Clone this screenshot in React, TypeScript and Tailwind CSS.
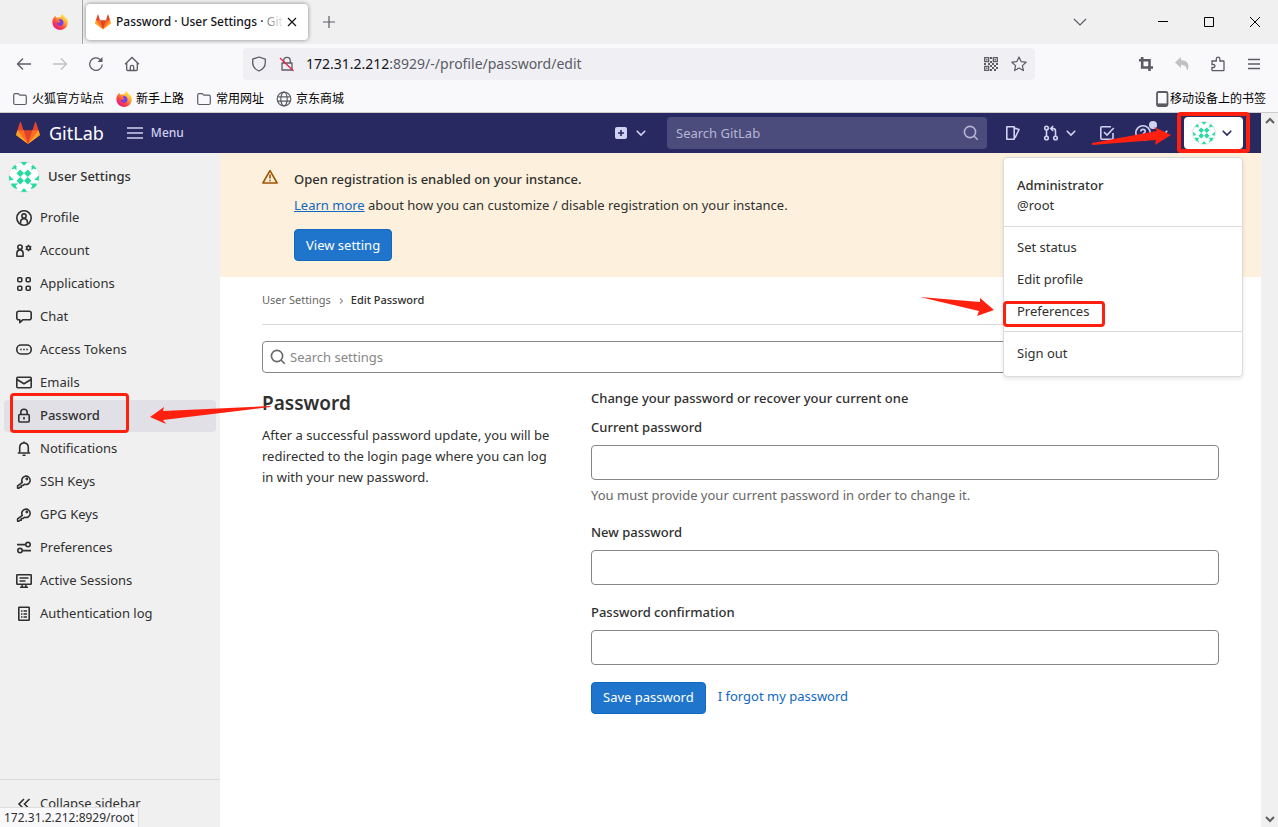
import type { ReactNode } from 'react';

type IconProps = { children: ReactNode; className?: string };

function Icon({ children, className = '' }: IconProps) {
  return (
    <svg
      viewBox="0 0 16 16"
      className={`h-4 w-4 shrink-0 ${className}`}
      fill="none"
      stroke="currentColor"
      strokeWidth="1.6"
      aria-hidden="true"
    >
      {children}
    </svg>
  );
}

const ChevronDown = ({ className = '' }: { className?: string }) => (
  <Icon className={className}>
    <path d="M4.2 6.2 8 10l3.8-3.8" strokeLinecap="round" />
  </Icon>
);

const SearchIcon = ({ className = '' }: { className?: string }) => (
  <Icon className={className}>
    <circle cx="7" cy="7" r="5.6" />
    <path d="m11.2 11.2 3.6 3.6" />
  </Icon>
);

const FolderIcon = () => (
  <Icon className="text-[#5b5b66]">
    <path d="M1.7 12V4.2c0-.9.6-1.5 1.5-1.5h2.6c.5 0 .9.2 1.2.6l.8.9h5c.9 0 1.5.6 1.5 1.5V12c0 .9-.6 1.5-1.5 1.5H3.2c-.9 0-1.5-.6-1.5-1.5z" strokeWidth="1.2" />
  </Icon>
);

function FirefoxLogo() {
  return (
    <svg viewBox="0 0 16 16" className="h-4 w-4 shrink-0" aria-hidden="true">
      <defs>
        <linearGradient id="fox" x1="0.85" y1="0.1" x2="0.2" y2="0.95">
          <stop offset="0" stopColor="#fff44f" />
          <stop offset="0.35" stopColor="#ffa436" />
          <stop offset="0.65" stopColor="#ff4a3c" />
          <stop offset="1" stopColor="#e31587" />
        </linearGradient>
      </defs>
      <path
        fill="url(#fox)"
        d="M15.3 5.4c-.3-.8-1-1.7-1.6-2 .5 1 .7 1.900.8 2.400C13.600 3.500 12.200 2.500 11 .7L10.400 0C9.300.7 8.900 2 8.800 2.900c-.8 0-1.600.3-2.300.7-.6-.1-1.500-.1-2 .1C3.800 3.300 3.700 2.200 3.800 1.700 2.900 2.200 2 3.200 1.500 4 .8 5.100.3 6.800.4 8.500.6 12.700 4 15.900 8.100 15.900c4 0 7.400-3 7.700-7 .1-1.200 0-2.500-.5-3.500z"
      />
      <path fill="#7542e5" d="M7.900 4.900c2 0 3.600 1.600 3.600 3.500S10 11.900 8 11.900 4.600 10.400 4.600 8.600c.9.6 1.900.4 2.500-.1.6-.4 1-.5 1.400-.5-.2-.8-1-1.200-1.900-1.200.1-.9.700-1.600 1.300-1.900z" />
    </svg>
  );
}

function GitLabLogo({ className = '' }: { className?: string }) {
  return (
    <svg viewBox="0 0 36 36" className={`shrink-0 ${className}`} aria-hidden="true">
      <path fill="#e24329" d="M2 14l9.380 9v-9l-4-12.280c-.205-.632-1.176-.632-1.380 0z" />
      <path fill="#e24329" d="M34 14l-9.380 9v-9l4-12.280c.205-.632 1.176-.632 1.380 0z" />
      <path fill="#e24329" d="M18 34.380 3 14h30z" />
      <path fill="#fc6d26" d="M18 34.380 11.380 14H2l4 11z" />
      <path fill="#fc6d26" d="M18 34.380 24.620 14H34l-4 11z" />
      <path fill="#fca326" d="M2 14 .1 20.160c-.18.565 0 1.200.5 1.560L18 34.380z" />
      <path fill="#fca326" d="m34 14 1.900 6.160c.18.565 0 1.200-.5 1.560L18 34.380z" />
    </svg>
  );
}

function Avatar({ className = '' }: { className?: string }) {
  return (
    <svg viewBox="0 0 32 32" className={`shrink-0 rounded-full border border-[#e4e4ea] bg-white ${className}`} aria-hidden="true">
      <g fill="#26dba0">
        <path d="M12 8l4 4-4 4-4-4zM20 8l4 4-4 4-4-4zM12 16l4 4-4 4-4-4zM20 16l4 4-4 4-4-4z" />
        <path d="M12 0h8l-4 4zM12 32h8l-4-4zM0 14v6l5-1zM32 14v6l-5-1z" />
        <path d="M4 2l4 2v5l-2-2-3 1zM28 2l-4 2v5l2-2 3 1zM2 23h8l-3 2 2 4-6-2zM30 23h-8l3 2-2 4 6-2z" />
      </g>
    </svg>
  );
}

const navItems: { label: string; icon: ReactNode }[] = [
  {
    label: 'Profile',
    icon: (
      <>
        <circle cx="8" cy="8" r="7.200" />
        <circle cx="8" cy="6" r="2.100" />
        <path d="M4.600 13.800v-1.600c0-2 1.400-3.400 3.400-3.400s3.400 1.400 3.400 3.400v1.600" />
      </>
    ),
  },
  {
    label: 'Account',
    icon: (
      <>
        <circle cx="4" cy="4.200" r="2.200" />
        <path d="M.9 13.200v-2.900C.9 8.300 2.200 7 4 7s3.100 1.300 3.100 3.300v2.900z" strokeLinejoin="round" />
        <circle cx="12.500" cy="5" r="1.700" />
        <path d="M12.500 1.800v1.400M12.500 6.800v1.400M9.700 3.400l1.200.7M14.100 5.900l1.200.7M9.700 6.600l1.200-.7M14.100 4.100l1.200-.7" />
      </>
    ),
  },
  {
    label: 'Applications',
    icon: (
      <>
        <rect x="1.800" y="1.800" width="4" height="4" rx="1" />
        <rect x="10.200" y="1.800" width="4" height="4" rx="1" />
        <rect x="1.800" y="10.200" width="4" height="4" rx="1" />
        <rect x="10.200" y="10.200" width="4" height="4" rx="1" />
      </>
    ),
  },
  {
    label: 'Chat',
    icon: <path d="M3.800 10.700v2.900l3.200-2.900h6.200c1.200 0 2-.8 2-2V4.300c0-1.200-.8-2-2-2H2.800c-1.200 0-2 .8-2 2v4.400c0 1.200.8 2 2 2z" strokeLinejoin="round" />,
  },
  {
    label: 'Access Tokens',
    icon: (
      <>
        <rect x=".8" y="3" width="14.400" height="9" rx="4.200" />
        <path d="M4.200 7.500h1.500M7.250 7.500h1.500M10.300 7.500h1.500" />
      </>
    ),
  },
  {
    label: 'Emails',
    icon: (
      <>
        <rect x=".8" y="2.300" width="14.400" height="10.400" rx="1" />
        <path d="m1 4.500 7 4.200 7-4.200" />
      </>
    ),
  },
  {
    label: 'Password',
    icon: (
      <>
        <rect x="2.800" y="6.500" width="10.400" height="7.500" rx="1" />
        <path d="M4.800 6.500V4.400a3.200 3.200 0 0 1 6.400 0v2.100M8 9v2.600" />
      </>
    ),
  },
  {
    label: 'Notifications',
    icon: (
      <>
        <path d="M3.700 11.700V6.600C3.700 4 5.400 2 8 2s4.300 2 4.300 4.600v5.100" />
        <path d="M1.800 12h12.400M8 .6V2M6.500 14.200h3" />
      </>
    ),
  },
  { label: 'SSH Keys', icon: <KeyShape /> },
  { label: 'GPG Keys', icon: <KeyShape /> },
  {
    label: 'Preferences',
    icon: (
      <>
        <circle cx="12" cy="4.600" r="2.200" />
        <circle cx="4" cy="10.600" r="2.200" />
        <path d="M1 4.600h8.600M6.400 10.600H15" />
      </>
    ),
  },
  {
    label: 'Active Sessions',
    icon: (
      <>
        <rect x=".8" y="1.800" width="14.400" height="9.400" rx=".5" />
        <path d="M3.500 5h9M3.500 8h6M6.200 11v3M9.800 11v3M4 14.200h8" />
      </>
    ),
  },
  {
    label: 'Authentication log',
    icon: (
      <>
        <rect x="2.800" y="1.200" width="10.400" height="13" rx=".5" />
        <path d="M5 5h1.500M7.500 5H11M5 8h1.500M7.500 8H11M5 11h1.500M7.500 11H11" />
      </>
    ),
  },
];

function KeyShape() {
  return (
    <>
      <path d="M6.300 8.400a4.200 4.200 0 1 1 2 1.800L7 11.500H5.300v1.700H3.800L2.900 14.200H1.600v-2.400z" strokeLinejoin="round" />
      <circle cx="10.800" cy="5" r=".6" />
    </>
  );
}

// Red frame drawn over a control
const Frame = ({ className }: { className: string }) => (
  <span className={`pointer-events-none absolute rounded-sm border-[#ff2010] ${className}`} />
);

function BrowserChrome() {
  return (
    <div className="shrink-0 text-[#15141a]">
      <div className="flex h-11 items-center bg-[#f0f0f0]">
        <div className="flex h-full w-[83px] items-center justify-end border-r border-[#a8a8a8] pr-[14px]">
          <FirefoxLogo />
        </div>
        <div className="ml-[3px] flex h-9 w-[222px] items-center rounded bg-white pl-[9px] pr-2 shadow-[0_0_4px_rgba(0,0,0,0.45)]">
          <GitLabLogo className="h-4 w-4" />
          <span className="ml-[5px] w-[168px] whitespace-nowrap text-xs font-medium">
            Password · User Settings ·{' '}
            <span className="bg-gradient-to-r from-[#777777] to-[#eeeeee] bg-clip-text font-normal text-transparent">Git</span>
          </span>
          <button aria-label="Close tab">
            <Icon>
              <path d="m4 4 8 8M12 4l-8 8" strokeWidth="1.200" />
            </Icon>
          </button>
        </div>
        <button aria-label="New tab" className="ml-[13px] text-[#5b5b66]">
          <Icon>
            <path d="M8 2v12M2 8h12" strokeWidth="1.200" />
          </Icon>
        </button>
        <button aria-label="List all tabs" className="ml-auto mr-[52px] text-[#5b5b66]">
          <Icon>
            <path d="m2 5 6 6 6-6" strokeWidth="1.200" />
          </Icon>
        </button>
        <button aria-label="Minimize" className="flex h-full w-[46px] items-center justify-center text-black">
          <Icon>
            <path d="M3 7.500h10" strokeWidth="1" />
          </Icon>
        </button>
        <button aria-label="Maximize" className="flex h-full w-[46px] items-center justify-center text-black">
          <Icon>
            <path d="M3.500 3.500h9v9h-9z" strokeWidth="1" />
          </Icon>
        </button>
        <button aria-label="Close" className="flex h-full w-[46px] items-center justify-center text-black">
          <Icon>
            <path d="m3 3 10 10M13 3 3 13" strokeWidth="1" />
          </Icon>
        </button>
      </div>

      <div className="flex h-10 items-center bg-[#f9f9fb] px-1.5 text-[#5b5b66]">
        <button aria-label="Back" className="flex w-9 justify-center">
          <Icon>
            <path d="M15 8H1.500M7 2.500 1.500 8 7 13.500" strokeWidth="1.300" />
          </Icon>
        </button>
        <button aria-label="Forward" className="flex w-9 justify-center text-[#c0c0c5]">
          <Icon>
            <path d="M1 8h13.500M9 2.500 14.500 8 9 13.500" strokeWidth="1.300" />
          </Icon>
        </button>
        <button aria-label="Reload" className="flex w-9 justify-center">
          <Icon>
            <path d="M14.300 8.500a6.300 6.300 0 1 1-2-5" strokeWidth="1.300" />
            <path d="M14.500 1v5h-5z" fill="currentColor" stroke="none" />
          </Icon>
        </button>
        <button aria-label="Home" className="flex w-9 justify-center">
          <Icon>
            <path d="M1 8.300 8 1.500l7 6.800M2.700 7v6.500c0 .6.400 1 1 1h8.600c.6 0 1-.4 1-1V7M6.300 14.500V11c0-1 .7-1.700 1.700-1.700s1.700.7 1.700 1.700v3.500" strokeWidth="1.300" />
          </Icon>
        </button>
        <div className="mx-[93px] flex h-8 flex-1 items-center rounded bg-[#f0f0f4] px-2">
          <Icon>
            <path d="M8 1 14.300 3.200v3.600c0 3.500-2.300 6.500-6.300 8.200-4-1.700-6.300-4.700-6.300-8.200V3.200z" strokeWidth="1.300" strokeLinejoin="round" />
          </Icon>
          <Icon className="ml-3">
            <path d="M4.700 6.500V4.700a3.300 3.300 0 0 1 6.600 0v1.800M3 7h10v7H3z" strokeWidth="1.300" strokeLinejoin="round" />
            <path d="m1 2 13.500 13" stroke="#e22850" strokeWidth="1.400" />
          </Icon>
          <div className="ml-[11px] flex-1 text-sm">
            <span className="text-[#15141a]">172.31.2.212</span>:8929/-/profile/password/edit
          </div>
          <button aria-label="QR code">
            <Icon>
              <path d="M1.700 1.700h4v4h-4zM10.300 1.700h4v4h-4zM1.700 10.300h4v4h-4z" strokeWidth="1.300" />
              <path d="M7 1h2v2H7zM7 5h2v2H7zM9 7h2v2H9zM1 7h2v2H1zM5 7h2v2H5zM13 7h2v2h-2zM7 9h2v2H7zM11 9h2v2h-2zM9 11h2v2H9zM13 11h2v2h-2zM7 13h2v2H7zM11 13h2v2h-2zM3 3h1.500v1.500H3zM11.500 3H13v1.500h-1.500zM3 11.500h1.500V13H3z" fill="currentColor" stroke="none" />
            </Icon>
          </button>
          <button aria-label="Bookmark this page" className="ml-3">
            <Icon>
              <path d="m8 1 2.100 4.600 5 .6-3.700 3.400 1 5L8 12.100l-4.400 2.500 1-5L.9 6.200l5-.6z" strokeWidth="1.200" strokeLinejoin="round" />
            </Icon>
          </button>
        </div>
        <button aria-label="Screenshot" className="flex w-9 justify-center">
          <Icon>
            <path d="M4.200 1v10.500H15M1 4.200h10.500V15" strokeWidth="2.600" />
          </Icon>
        </button>
        <button aria-label="Undo" className="flex w-9 justify-center text-[#c0c0c5]">
          <Icon>
            <path d="M1 6.500 7 1v3.300c4.500 0 7.500 2 7.500 6.200 0 1.600-.6 3-1.500 4-.2-3.500-2-5.500-6-5.700V12z" fill="currentColor" stroke="none" />
          </Icon>
        </button>
        <button aria-label="Extensions" className="flex w-9 justify-center">
          <Icon>
            <path d="M2 5h4.300V3a1.800 1.800 0 0 1 3.600 0v2h3.400c.4 0 .7.3.7.7V14c0 .4-.3.700-.7.700H2.700c-.4 0-.7-.3-.7-.7v-2.500h1.500a1.500 1.500 0 0 0 0-3H2z" strokeWidth="1.300" />
          </Icon>
        </button>
        <button aria-label="Application menu" className="flex w-9 justify-center">
          <Icon>
            <path d="M2 3.500h12M2 8h12M2 12.500h12" strokeWidth="1.300" />
          </Icon>
        </button>
      </div>

      <div className="flex h-[29px] items-center gap-3 border-b border-[#cccccc] bg-[#f9f9fb] px-3 pt-0.5 text-xs text-black">
        <a href="#" className="flex items-center gap-1"><FolderIcon />火狐官方站点</a>
        <a href="#" className="flex items-center gap-1"><FirefoxLogo />新手上路</a>
        <a href="#" className="flex items-center gap-1"><FolderIcon />常用网址</a>
        <a href="#" className="flex items-center gap-1">
          <Icon className="text-[#5b5b66]">
            <circle cx="8" cy="8" r="6.800" strokeWidth="1.200" />
            <ellipse cx="8" cy="8" rx="3.200" ry="6.800" strokeWidth="1.200" />
            <path d="M1.500 5.800h13M1.500 10.200h13" strokeWidth="1.200" />
          </Icon>
          京东商城
        </a>
        <a href="#" className="ml-auto flex items-center">
          <Icon className="text-[#5b5b66]">
            <rect x="3" y="1" width="10.500" height="14" rx="1.500" strokeWidth="1.800" />
            <path d="M3 13.300h10" strokeWidth="1.800" />
          </Icon>
          移动设备上的书签
        </a>
      </div>
    </div>
  );
}

function UserMenu() {
  return (
    <div className="absolute right-[18px] top-11 z-20 w-60 rounded border border-[#dbdbdb] bg-white text-[#303030] shadow-[0_2px_4px_rgba(0,0,0,0.1)]">
      <div className="border-b border-[#dbdbdb] px-[13px] pb-[11px] pt-[17px] leading-5">
        <div className="font-medium">Administrator</div>
        <div>@root</div>
      </div>
      <ul className="border-b border-[#dbdbdb] pb-[3px] pt-[5px]">
        <li><a href="#" className="flex h-8 items-center px-[13px]">Set status</a></li>
        <li><a href="#" className="flex h-8 items-center px-[13px]">Edit profile</a></li>
        <li className="relative">
          <a href="#" className="flex h-8 items-center px-[13px]">Preferences</a>
          <Frame className="-left-px top-[5px] h-[26px] w-[102px] border-3" />
          <svg viewBox="0 0 76 22" className="pointer-events-none absolute -left-[85px] top-px h-[22px] w-[76px]" fill="#ff2010" aria-hidden="true">
            <path d="M1 0 61 5 61 1 75 13 58 19 60 14z" />
          </svg>
        </li>
      </ul>
      <a href="#" className="flex h-11 items-center px-[13px]">Sign out</a>
    </div>
  );
}

function Header() {
  return (
    <header className="relative flex h-10 shrink-0 items-center bg-[#292961] pl-4 pr-[18px] text-[#d1d1f0]">
      <a href="#" className="flex items-center gap-[9px] text-lg text-white">
        <GitLabLogo className="h-6 w-6" />
        GitLab
      </a>
      <button className="ml-[23px] flex items-center gap-2 text-xs font-medium">
        <Icon>
          <path d="M0 3h16M0 8h16M0 13h16" />
        </Icon>
        Menu
      </button>
      <button aria-label="Create new" className="ml-auto flex items-center gap-1">
        <Icon>
          <rect x="2" y="2" width="12" height="12" rx="2" fill="currentColor" stroke="none" />
          <path d="M8 5v6M5 8h6" stroke="#292961" />
        </Icon>
        <ChevronDown />
      </button>
      <label className="relative ml-[18px] w-80">
        <input
          type="text"
          aria-label="Search GitLab"
          placeholder="Search GitLab"
          className="block h-8 w-full rounded bg-[#4c4c7c] pl-[9px] pr-9 placeholder:text-[#b5b5d6]"
        />
        <SearchIcon className="absolute right-2 top-2 text-[#b5b5d6]" />
      </label>
      <button aria-label="Issues" className="ml-[18px]">
        <Icon>
          <path d="M1.800 1.800h7.400v12.400H1.800zM9.500 3l4.500 1.500-4 8.500" strokeLinejoin="round" />
        </Icon>
      </button>
      <button aria-label="Merge requests" className="ml-[22px] flex items-center gap-1">
        <Icon>
          <circle cx="3.500" cy="3" r="1.800" />
          <circle cx="3.500" cy="13" r="1.800" />
          <circle cx="12.500" cy="13" r="1.800" />
          <path d="M3.500 5v6M12.500 11V6c0-1.500-.8-2.500-2.500-2.500H8M10.200 1 7.700 3.500 10.200 6" />
        </Icon>
        <ChevronDown />
      </button>
      <button aria-label="To-Do List" className="ml-5">
        <Icon>
          <path d="M14 8v5.200c0 .6-.4 1-1 1H2.800c-.6 0-1-.4-1-1V2.800c0-.6.4-1 1-1H12M5 7l3 3 6.800-7" />
        </Icon>
      </button>
      <button aria-label="Help" className="relative ml-5 flex items-center gap-1">
        <Icon>
          <circle cx="8" cy="8" r="7.200" />
          <path d="M5.800 6.500c0-1.300 1-2.100 2.200-2.100s2.200.8 2.200 2c0 1.500-2.200 1.500-2.200 3.300M8 10.700v1.500" />
        </Icon>
        <ChevronDown />
        <span className="absolute -top-1 left-[14px] h-2 w-2 rounded-full bg-[#d1d1f0]" />
      </button>
      <button aria-label="Administrator" className="relative ml-[13px] flex h-8 w-[59px] items-center gap-[3px] rounded bg-white pl-2 text-[#292961]">
        <Avatar className="h-6 w-6" />
        <ChevronDown />
        <Frame className="-left-[7px] -top-[5px] h-[41px] w-[73px] border-4" />
        <svg viewBox="0 0 80 18" className="pointer-events-none absolute -left-[92px] top-[10px] h-[18px] w-20" fill="#ff2010" aria-hidden="true">
          <path d="M0 16 65 4 62 0 79 8 63 18 64 13 0 18z" />
        </svg>
      </button>
      <UserMenu />
    </header>
  );
}

function Sidebar() {
  return (
    <aside className="flex w-[220px] shrink-0 flex-col bg-[#f0f0f0] text-[#303030]">
      <a href="#" className="mb-[9px] flex items-center gap-2 pl-2 pt-2 font-medium">
        <Avatar className="h-8 w-8" />
        User Settings
      </a>
      <nav className="flex flex-col gap-px px-1">
        {navItems.map(({ label, icon }) => {
          const active = label === 'Password';
          return (
            <a
              key={label}
              href="#"
              className={`relative flex h-8 items-center gap-2 rounded pl-3 ${active ? 'bg-[#e1e0e6] font-medium' : ''}`}
            >
              <Icon>{icon}</Icon>
              {label}
              {active && (
                <>
                  <Frame className="-top-[7px] left-[6px] h-10 w-[119px] border-3" />
                  <svg viewBox="0 0 122 20" className="pointer-events-none absolute left-[146px] top-[6px] z-10 h-5 w-[122px]" fill="#ff2010" aria-hidden="true">
                    <path d="M0 11 14 1 13 5 121 0 120 1 13 14 16 18z" />
                  </svg>
                </>
              )}
            </a>
          );
        })}
      </nav>
      <button className="mt-auto flex h-12 shrink-0 items-center gap-2 border-t border-[#dbdbdb] pl-4">
        <Icon>
          <path d="M8 3 3 8l5 5M13.500 3l-5 5 5 5" />
        </Icon>
        Collapse sidebar
      </button>
    </aside>
  );
}

function PasswordField({ id, label, help }: { id: string; label: string; help?: string }) {
  return (
    <div className="mb-[17px]">
      <label htmlFor={id} className="mb-2 block leading-5 font-medium">{label}</label>
      <input id={id} type="password" className="block h-[35px] w-full rounded border border-[#868686] bg-white px-3" />
      {help && <p className="pt-[5px] leading-5 text-[#666666]">{help}</p>}
    </div>
  );
}

function Content() {
  return (
    <main className="min-w-0 flex-1 bg-white text-[#303030]">
      <section className="flex gap-4 bg-[#fdf1dd] px-[42px] py-4">
        <Icon className="text-[#9e5400]">
          <path d="M8 1.600.9 14h14.200z" strokeLinejoin="round" />
          <path d="M8 5.500v4M8 10.700v1.500" />
        </Icon>
        <div className="leading-5">
          <h2 className="font-medium">Open registration is enabled on your instance.</h2>
          <p className="mt-1.5">
            <a href="#" className="text-[#1068bf] underline">Learn more</a> about how you can customize / disable registration on your instance.
          </p>
          <button className="mt-[14px] h-8 rounded border border-[#1068bf] bg-[#1f75cb] px-[11px] text-white">View setting</button>
        </div>
      </section>

      <div className="px-[42px]">
        <nav className="flex h-12 items-center gap-0.5 border-b border-[#dbdbdb] text-[11px]">
          <a href="#" className="text-[#666666]">User Settings</a>
          <Icon className="text-[#999999]">
            <path d="m7 5.500 2.500 2.500L7 10.500" strokeWidth="1.200" />
          </Icon>
          <a href="#" className="font-medium">Edit Password</a>
        </nav>
        <label className="relative mt-4 block">
          <SearchIcon className="absolute left-2 top-2 text-[#666666]" />
          <input
            type="search"
            aria-label="Search settings"
            placeholder="Search settings"
            className="block h-8 w-full rounded border border-[#868686] bg-white pl-[27px] pr-3 placeholder:text-[#868686]"
          />
        </label>

        <div className="mt-[15px] grid grid-cols-3 gap-x-[30px]">
          <div>
            <h1 className="text-[19px] leading-[30px] font-semibold">Password</h1>
            <p className="mt-[7px] leading-[21px]">
              After a successful password update, you will be redirected to the login page where you can log in with your new password.
            </p>
          </div>
          <form className="col-span-2" onSubmit={(e) => e.preventDefault()}>
            <h2 className="mb-[9px] leading-5 font-medium">Change your password or recover your current one</h2>
            <PasswordField id="current" label="Current password" help="You must provide your current password in order to change it." />
            <PasswordField id="new" label="New password" />
            <PasswordField id="confirm" label="Password confirmation" />
            <div className="flex gap-3">
              <button type="submit" className="h-8 rounded border border-[#1068bf] bg-[#1f75cb] px-[11px] text-white">Save password</button>
              <a href="#" className="pt-1 leading-5 text-[#1068bf]">I forgot my password</a>
            </div>
          </form>
        </div>
      </div>
    </main>
  );
}

export default function App() {
  return (
    <div className="relative flex min-h-screen flex-col overflow-hidden bg-white text-[13px] [font-family:'Noto_Sans','Noto_Sans_CJK_SC',sans-serif]">
      <BrowserChrome />
      <div className="flex flex-1">
        <div className="flex min-w-0 flex-1 flex-col">
          <Header />
          <div className="flex flex-1">
            <Sidebar />
            <Content />
          </div>
        </div>
        <div className="flex w-[17px] shrink-0 flex-col items-center justify-between bg-[#f0f0f0] text-[#606060]">
          <Icon>
            <path d="m4 10 4-4 4 4" strokeWidth="2" />
          </Icon>
          <Icon>
            <path d="m4 6 4 4 4-4" strokeWidth="2" />
          </Icon>
        </div>
      </div>
      <div className="absolute bottom-0 left-0 h-5 border-r border-t border-[#dddddd] bg-[#f9f9fb] px-1 text-xs leading-5 text-[#303030]">
        172.31.2.212:8929/root
      </div>
    </div>
  );
}
